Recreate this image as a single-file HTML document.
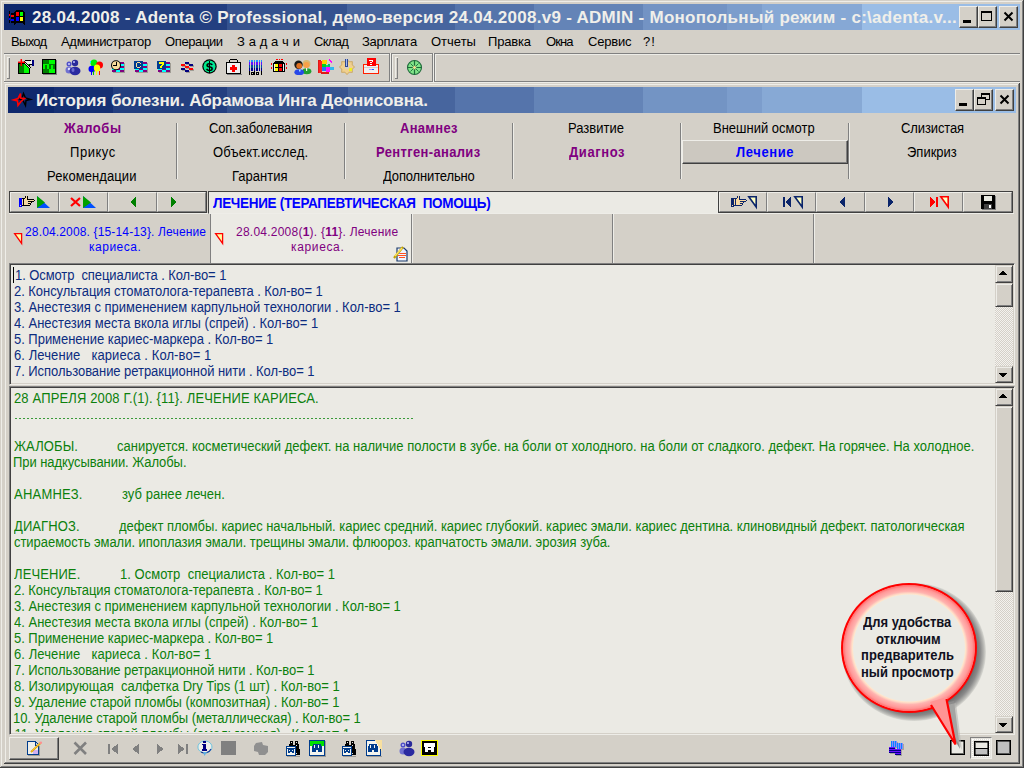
<!DOCTYPE html>
<html><head><meta charset="utf-8"><style>
*{margin:0;padding:0;box-sizing:border-box}
html,body{width:1024px;height:768px;overflow:hidden;background:#d4d0c8;font-family:"Liberation Sans",sans-serif;position:relative}
.a{position:absolute}
.t{position:absolute;white-space:pre;line-height:1}
.ico{position:absolute;overflow:visible}
.ctext{color:#f0efea;font-weight:bold;font-size:17px}
.cbtn{position:absolute;width:19px;height:22px;background:#d4d0c8;border-top:1px solid #eeede8;border-left:1px solid #eeede8;border-right:1px solid #404040;border-bottom:1px solid #404040;box-shadow:inset -1px -1px 0 #808080}
.cbtn svg{position:absolute;left:0;top:0}
.menu{font-size:13px;color:#000}
.grid{font-size:13px;color:#000;transform:scaleY(1.1);transform-origin:0 11px}
.box{position:absolute;background:#ebeae4;border-top:1px solid #808080;border-left:1px solid #808080;border-right:1px solid #eeede8;border-bottom:1px solid #eeede8;box-shadow:inset 1px 1px 0 #404040, inset -1px -1px 0 #d4d0c8}
.lst{font-size:13px;color:#0c2c80;transform:scaleY(1.1);transform-origin:0 11px}
.grn{font-size:13px;color:#0c800c;transform:scaleY(1.1);transform-origin:0 11px}
.sbtn{position:absolute;width:17px;height:17px;background:#d4d0c8;border-top:1px solid #d4d0c8;border-left:1px solid #d4d0c8;border-right:1px solid #404040;border-bottom:1px solid #404040;box-shadow:inset 1px 1px 0 #eeede8, inset -1px -1px 0 #808080}
.sbtn svg{position:absolute;left:0;top:0}
.raised{position:absolute;background:#d4d0c8;border-top:1px solid #eeede8;border-left:1px solid #eeede8;border-right:1px solid #404040;border-bottom:1px solid #404040;box-shadow:inset -1px -1px 0 #808080}
.rb{position:absolute;background:#d4d0c8;border-top:1px solid #eeede8;border-left:1px solid #eeede8;border-right:1px solid #808080;border-bottom:1px solid #808080}
</style></head><body>
<div class="a" style="left:1px;top:1px;width:1021px;height:1px;background:#eeede8;"></div>
<div class="a" style="left:1px;top:1px;width:1px;height:765px;background:#eeede8;"></div>
<div class="a" style="left:1022px;top:1px;width:1px;height:766px;background:#808080;"></div>
<div class="a" style="left:1023px;top:0px;width:1px;height:768px;background:#404040;"></div>
<div class="a" style="left:1px;top:766px;width:1022px;height:1px;background:#808080;"></div>
<div class="a" style="left:0px;top:767px;width:1024px;height:1px;background:#404040;"></div>
<div class="a" style="left:4px;top:4px;width:46px;height:26px;background:#0e286d;"></div>
<div class="a" style="left:50px;top:4px;width:60px;height:26px;background:#163074;"></div>
<div class="a" style="left:110px;top:4px;width:117px;height:26px;background:#233f80;"></div>
<div class="a" style="left:227px;top:4px;width:120px;height:26px;background:#35528f;"></div>
<div class="a" style="left:347px;top:4px;width:108px;height:26px;background:#47659e;"></div>
<div class="a" style="left:455px;top:4px;width:79px;height:26px;background:#5574ab;"></div>
<div class="a" style="left:534px;top:4px;width:109px;height:26px;background:#6484b7;"></div>
<div class="a" style="left:643px;top:4px;width:84px;height:26px;background:#7393c4;"></div>
<div class="a" style="left:727px;top:4px;width:35px;height:26px;background:#7c9dcc;"></div>
<div class="a" style="left:762px;top:4px;width:100px;height:26px;background:#86a8d5;"></div>
<div class="a" style="left:862px;top:4px;width:158px;height:26px;background:#9abde6;"></div>
<svg class="ico" style="left:8px;top:9px" width="20" height="17" shape-rendering="crispEdges"><rect x="1" y="2" width="1" height="12" fill="#000"/><rect x="1" y="5" width="1" height="2" fill="#ff0000"/><rect x="1" y="9" width="1" height="2" fill="#0000ff"/><rect x="3" y="4" width="3" height="10" fill="#000"/><rect x="3" y="6" width="3" height="2" fill="#ff0000"/><rect x="3" y="10" width="3" height="2" fill="#0000ff"/><path d="M6 3 L9 1 L14 1 L17 3 L17 16 L14 14 L9 14 L6 16Z" fill="#000"/><rect x="8" y="3" width="3" height="4" fill="#ff0000"/><rect x="12" y="3" width="3" height="4" fill="#00ff00"/><rect x="8" y="8" width="3" height="4" fill="#0000ff"/><rect x="12" y="8" width="3" height="4" fill="#ffff00"/></svg>
<div class="t ctext" style="left:32.00px;top:9px;letter-spacing:0.275px;">28.04.2008 - Adenta © Professional, демо-версия 24.04.2008.v9 - ADMIN - Монопольный режим - c:\adenta.v...</div>
<div class="cbtn" style="left:959px;top:6px"><svg width="17" height="20"><rect x="3" y="13" width="8" height="3" fill="#000"/></svg></div>
<div class="cbtn" style="left:978px;top:6px"><svg width="17" height="20"><rect x="2.5" y="4.5" width="10" height="9" fill="none" stroke="#000" stroke-width="1"/><rect x="2" y="4" width="11" height="2" fill="#000"/></svg></div>
<div class="cbtn" style="left:999px;top:6px"><svg width="17" height="20"><path d="M4.5 5.5 L12.5 13.5 M12.5 5.5 L4.5 13.5" stroke="#000" stroke-width="2"/></svg></div>
<div class="t menu" style="left:11.00px;top:35px;letter-spacing:-0.675px;">Выход</div>
<div class="t menu" style="left:61.00px;top:35px;letter-spacing:-0.300px;">Администратор</div>
<div class="t menu" style="left:165.00px;top:35px;letter-spacing:-0.386px;">Операции</div>
<div class="t menu" style="left:237.00px;top:35px;letter-spacing:0.090px;">З а д а ч и</div>
<div class="t menu" style="left:314.00px;top:35px;letter-spacing:-0.675px;">Склад</div>
<div class="t menu" style="left:362.00px;top:35px;letter-spacing:-0.257px;">Зарплата</div>
<div class="t menu" style="left:431.00px;top:35px;letter-spacing:0.000px;">Отчеты</div>
<div class="t menu" style="left:488.00px;top:35px;letter-spacing:-0.180px;">Правка</div>
<div class="t menu" style="left:546.00px;top:35px;letter-spacing:-0.900px;">Окна</div>
<div class="t menu" style="left:588.00px;top:35px;letter-spacing:-0.180px;">Сервис</div>
<div class="t menu" style="left:643.00px;top:35px;letter-spacing:0.900px;">?!</div>
<div class="a" style="left:3px;top:53px;width:387px;height:1px;background:#808080;"></div>
<div class="a" style="left:3px;top:81px;width:387px;height:1px;background:#808080;"></div>
<div class="a" style="left:3px;top:53px;width:1px;height:29px;background:#808080;"></div>
<div class="a" style="left:389px;top:53px;width:1px;height:29px;background:#808080;"></div>
<div class="a" style="left:4px;top:54px;width:385px;height:1px;background:#eeede8;"></div>
<div class="a" style="left:4px;top:54px;width:1px;height:27px;background:#eeede8;"></div>
<div class="a" style="left:3px;top:82px;width:388px;height:1px;background:#eeede8;"></div>
<div class="a" style="left:390px;top:53px;width:1px;height:30px;background:#eeede8;"></div>
<div class="a" style="left:391px;top:53px;width:42px;height:1px;background:#808080;"></div>
<div class="a" style="left:391px;top:81px;width:42px;height:1px;background:#808080;"></div>
<div class="a" style="left:391px;top:53px;width:1px;height:29px;background:#808080;"></div>
<div class="a" style="left:432px;top:53px;width:1px;height:29px;background:#808080;"></div>
<div class="a" style="left:392px;top:54px;width:40px;height:1px;background:#eeede8;"></div>
<div class="a" style="left:392px;top:54px;width:1px;height:27px;background:#eeede8;"></div>
<div class="a" style="left:391px;top:82px;width:43px;height:1px;background:#eeede8;"></div>
<div class="a" style="left:433px;top:53px;width:1px;height:30px;background:#eeede8;"></div>
<div class="a" style="left:434px;top:53px;width:586px;height:1px;background:#808080;"></div>
<div class="a" style="left:434px;top:81px;width:586px;height:1px;background:#808080;"></div>
<div class="a" style="left:434px;top:53px;width:1px;height:29px;background:#808080;"></div>
<div class="a" style="left:435px;top:54px;width:585px;height:1px;background:#eeede8;"></div>
<div class="a" style="left:435px;top:54px;width:1px;height:27px;background:#eeede8;"></div>
<div class="a" style="left:434px;top:82px;width:586px;height:1px;background:#eeede8;"></div>
<div class="a" style="left:3px;top:53px;width:1px;height:30px;background:#d4d0c8;"></div>
<div class="a" style="left:7px;top:57px;width:1px;height:21px;background:#eeede8;"></div>
<div class="a" style="left:9px;top:57px;width:1px;height:22px;background:#808080;"></div>
<div class="a" style="left:7px;top:57px;width:3px;height:1px;background:#eeede8;"></div>
<div class="a" style="left:7px;top:78px;width:3px;height:1px;background:#808080;"></div>
<div class="a" style="left:395px;top:57px;width:1px;height:21px;background:#eeede8;"></div>
<div class="a" style="left:397px;top:57px;width:1px;height:22px;background:#808080;"></div>
<div class="a" style="left:395px;top:57px;width:3px;height:1px;background:#eeede8;"></div>
<div class="a" style="left:395px;top:78px;width:3px;height:1px;background:#808080;"></div>
<svg class="ico" style="left:18px;top:59px;" width="16" height="15" viewBox="0 0 16 15" shape-rendering="crispEdges"><rect x="0" y="4" width="12" height="11" fill="#000"/><rect x="1" y="5" width="5" height="9" fill="#008000"/><rect x="6" y="5" width="5" height="9" fill="#00ff00"/><rect x="7" y="1" width="6" height="1" fill="#000"/><rect x="6" y="2" width="1" height="1" fill="#000"/><rect x="7" y="2" width="6" height="3" fill="#f0f0ea"/><rect x="13" y="2" width="1" height="3" fill="#f0f0ea"/><rect x="12" y="5" width="2" height="1" fill="#000"/><rect x="14" y="1" width="2" height="6" fill="#000080"/><rect x="5" y="3" width="1" height="1" fill="#000"/><rect x="6" y="3" width="1" height="1" fill="#f0f0ea"/><rect x="7" y="3" width="1" height="1" fill="#000"/><rect x="6" y="4" width="1" height="1" fill="#000"/><rect x="7" y="4" width="1" height="1" fill="#f0f0ea"/><rect x="8" y="4" width="1" height="1" fill="#000"/><rect x="7" y="5" width="1" height="1" fill="#000"/><rect x="8" y="5" width="1" height="1" fill="#f0f0ea"/><rect x="9" y="5" width="1" height="1" fill="#000"/><rect x="8" y="6" width="1" height="1" fill="#000"/><rect x="9" y="6" width="1" height="1" fill="#f0f0ea"/><rect x="10" y="6" width="1" height="1" fill="#000"/><rect x="9" y="7" width="1" height="1" fill="#000"/><rect x="10" y="7" width="1" height="1" fill="#f0f0ea"/><rect x="11" y="7" width="1" height="1" fill="#000"/><rect x="10" y="8" width="1" height="1" fill="#000"/><rect x="11" y="8" width="1" height="1" fill="#f0f0ea"/><rect x="12" y="8" width="1" height="1" fill="#000"/><rect x="0" y="3" width="7" height="1" fill="#ff0000"/><rect x="0" y="2" width="7" height="1" fill="rgba(255,0,0,.45)"/><rect x="3" y="0" width="1" height="7" fill="#ff0000"/><rect x="2" y="0" width="1" height="7" fill="rgba(255,0,0,.45)"/></svg>
<svg class="ico" style="left:42px;top:59px;" width="15" height="16" viewBox="0 0 15 16" shape-rendering="crispEdges"><rect x="0" y="0" width="14" height="15" fill="#000"/><rect x="1" y="1" width="6" height="4" fill="#008000"/><rect x="7" y="1" width="6" height="4" fill="#00ff00"/><rect x="1" y="5" width="6" height="5" fill="#00ff00"/><rect x="3" y="6" width="2" height="4" fill="#008000"/><rect x="7" y="5" width="6" height="5" fill="#008000"/><rect x="9" y="6" width="2" height="4" fill="#00ff00"/><rect x="1" y="10" width="6" height="4" fill="#008000"/><rect x="7" y="10" width="6" height="4" fill="#00ff00"/><rect x="1" y="15" width="14" height="1" fill="#808080"/><rect x="14" y="1" width="1" height="15" fill="#808080"/></svg>
<svg class="ico" style="left:65px;top:59px;" width="16" height="16" viewBox="0 0 16 16" shape-rendering="crispEdges"><g shape-rendering="geometricPrecision"><circle cx="4" cy="5" r="2.5" fill="#5050c8"/><circle cx="4" cy="5" r="1" fill="#d0d0ff"/><ellipse cx="4" cy="11" rx="3.5" ry="3.5" fill="#7070d0"/><circle cx="4" cy="10" r="1.2" fill="#e0e0ff"/><circle cx="10" cy="4" r="3.2" fill="#2a2a9a"/><circle cx="9" cy="3" r="1" fill="#c0c0ff"/><ellipse cx="10" cy="12" rx="5.5" ry="4.2" fill="#2a2aa0"/><ellipse cx="8" cy="11" rx="1.5" ry="2" fill="#6a6ad0"/></g></svg>
<svg class="ico" style="left:88px;top:59px;" width="16" height="16" viewBox="0 0 16 16" shape-rendering="crispEdges"><g shape-rendering="geometricPrecision"><ellipse cx="6" cy="4" rx="3.5" ry="3.5" fill="#00ee00"/><ellipse cx="11.5" cy="6" rx="3.5" ry="3.5" fill="#ff0000"/><ellipse cx="4" cy="10" rx="3.5" ry="3.2" fill="#0000ff"/><ellipse cx="9" cy="9" rx="3.2" ry="3.5" fill="#ffff00"/></g><rect x="3" y="13" width="1" height="3" fill="#0000ff"/><rect x="5" y="12" width="1" height="4" fill="#00c000"/><rect x="8" y="12" width="1" height="4" fill="#ffff00"/><rect x="11" y="12" width="1" height="4" fill="#ff0000"/><rect x="2" y="2" width="1" height="2" fill="#00ffff"/></svg>
<svg class="ico" style="left:111px;top:60px;" width="15" height="14" viewBox="0 0 15 14" shape-rendering="crispEdges"><rect x="1" y="2" width="4" height="2" fill="#800080"/><rect x="5" y="2" width="4" height="2" fill="#00ffff"/><rect x="9" y="2" width="4" height="2" fill="#800080"/><rect x="1" y="4" width="4" height="2" fill="#00ffff"/><rect x="5" y="4" width="4" height="2" fill="#800080"/><rect x="9" y="4" width="4" height="2" fill="#00ffff"/><rect x="1" y="6" width="4" height="2" fill="#800080"/><rect x="5" y="6" width="4" height="2" fill="#00ffff"/><rect x="9" y="6" width="4" height="2" fill="#800080"/><rect x="1" y="8" width="4" height="2" fill="#00ffff"/><rect x="5" y="8" width="4" height="2" fill="#800080"/><rect x="9" y="8" width="4" height="2" fill="#00ffff"/><rect x="1" y="10" width="4" height="2" fill="#800080"/><rect x="5" y="10" width="4" height="2" fill="#00ffff"/><rect x="9" y="10" width="4" height="2" fill="#800080"/><rect x="2" y="12" width="12" height="1" fill="#a09c94"/><rect x="13" y="3" width="1" height="10" fill="#a09c94"/><g shape-rendering="geometricPrecision"><circle cx="5" cy="5.2" r="5" fill="#000"/><circle cx="5" cy="5.2" r="4" fill="#f8dc9c"/></g><rect x="5" y="2" width="1" height="3" fill="#000"/><rect x="2" y="5" width="4" height="1" fill="#000"/></svg>
<svg class="ico" style="left:134px;top:60px;" width="15" height="14" viewBox="0 0 15 14" shape-rendering="crispEdges"><rect x="1" y="2" width="4" height="2" fill="#800080"/><rect x="5" y="2" width="4" height="2" fill="#00ffff"/><rect x="9" y="2" width="4" height="2" fill="#800080"/><rect x="1" y="4" width="4" height="2" fill="#00ffff"/><rect x="5" y="4" width="4" height="2" fill="#800080"/><rect x="9" y="4" width="4" height="2" fill="#00ffff"/><rect x="1" y="6" width="4" height="2" fill="#800080"/><rect x="5" y="6" width="4" height="2" fill="#00ffff"/><rect x="9" y="6" width="4" height="2" fill="#800080"/><rect x="1" y="8" width="4" height="2" fill="#00ffff"/><rect x="5" y="8" width="4" height="2" fill="#800080"/><rect x="9" y="8" width="4" height="2" fill="#00ffff"/><rect x="1" y="10" width="4" height="2" fill="#800080"/><rect x="5" y="10" width="4" height="2" fill="#00ffff"/><rect x="9" y="10" width="4" height="2" fill="#800080"/><rect x="2" y="12" width="12" height="1" fill="#a09c94"/><rect x="13" y="3" width="1" height="10" fill="#a09c94"/><rect x="0" y="1" width="9" height="8" fill="#003c90"/><rect x="3" y="2" width="3" height="1" fill="#f8dc9c"/><rect x="2" y="3" width="1" height="4" fill="#f8dc9c"/><rect x="3" y="7" width="3" height="1" fill="#f8dc9c"/><rect x="6" y="3" width="1" height="1" fill="#f8dc9c"/><rect x="6" y="6" width="1" height="1" fill="#f8dc9c"/></svg>
<svg class="ico" style="left:157px;top:60px;" width="15" height="14" viewBox="0 0 15 14" shape-rendering="crispEdges"><rect x="1" y="2" width="4" height="2" fill="#800080"/><rect x="5" y="2" width="4" height="2" fill="#00ffff"/><rect x="9" y="2" width="4" height="2" fill="#800080"/><rect x="1" y="4" width="4" height="2" fill="#00ffff"/><rect x="5" y="4" width="4" height="2" fill="#800080"/><rect x="9" y="4" width="4" height="2" fill="#00ffff"/><rect x="1" y="6" width="4" height="2" fill="#800080"/><rect x="5" y="6" width="4" height="2" fill="#00ffff"/><rect x="9" y="6" width="4" height="2" fill="#800080"/><rect x="1" y="8" width="4" height="2" fill="#00ffff"/><rect x="5" y="8" width="4" height="2" fill="#800080"/><rect x="9" y="8" width="4" height="2" fill="#00ffff"/><rect x="1" y="10" width="4" height="2" fill="#800080"/><rect x="5" y="10" width="4" height="2" fill="#00ffff"/><rect x="9" y="10" width="4" height="2" fill="#800080"/><rect x="2" y="12" width="12" height="1" fill="#a09c94"/><rect x="13" y="3" width="1" height="10" fill="#a09c94"/><rect x="0" y="1" width="9" height="8" fill="#003c90"/><rect x="2" y="2" width="5" height="2" fill="#ffff00"/><rect x="5" y="4" width="2" height="1" fill="#ffff00"/><rect x="4" y="5" width="2" height="1" fill="#ffff00"/><rect x="3" y="6" width="2" height="2" fill="#ffff00"/></svg>
<svg class="ico" style="left:181px;top:62px;" width="13" height="11" viewBox="0 0 13 11" shape-rendering="crispEdges"><rect x="5" y="1" width="4" height="2" fill="#a09c94"/><rect x="1" y="3" width="4" height="2" fill="#a09c94"/><rect x="9" y="3" width="4" height="2" fill="#a09c94"/><rect x="5" y="5" width="4" height="2" fill="#a09c94"/><rect x="1" y="7" width="4" height="2" fill="#a09c94"/><rect x="9" y="7" width="4" height="2" fill="#a09c94"/><rect x="5" y="9" width="4" height="2" fill="#a09c94"/><rect x="4" y="0" width="4" height="2" fill="#000080"/><rect x="0" y="2" width="4" height="2" fill="#ff0000"/><rect x="8" y="2" width="4" height="2" fill="#000080"/><rect x="4" y="4" width="4" height="2" fill="#ff0000"/><rect x="0" y="6" width="4" height="2" fill="#000080"/><rect x="8" y="6" width="4" height="2" fill="#ff0000"/><rect x="4" y="8" width="4" height="2" fill="#000080"/></svg>
<svg class="ico" style="left:202px;top:59px;" width="16" height="16" viewBox="0 0 16 16" shape-rendering="crispEdges"><g shape-rendering="geometricPrecision"><circle cx="7.5" cy="7.5" r="7.2" fill="#000"/><circle cx="7.5" cy="7.5" r="6" fill="#00e890"/><text x="7.6" y="11.8" font-family="Liberation Sans" font-weight="bold" font-size="11.5" text-anchor="middle" fill="#000">S</text></g><rect x="7" y="2" width="1" height="12" fill="#000"/></svg>
<svg class="ico" style="left:226px;top:59px;" width="16" height="16" viewBox="0 0 16 16" shape-rendering="crispEdges"><rect x="4" y="0" width="7" height="1" fill="#000"/><rect x="3" y="1" width="1" height="3" fill="#000"/><rect x="11" y="1" width="1" height="3" fill="#000"/><rect x="0" y="3" width="15" height="12" fill="#000"/><rect x="1" y="4" width="13" height="10" fill="#f0f0f0"/><rect x="6" y="6" width="3" height="7" fill="#ff0000"/><rect x="4" y="8" width="7" height="3" fill="#ff0000"/><rect x="1" y="15" width="15" height="1" fill="#808080"/></svg>
<svg class="ico" style="left:249px;top:60px;" width="14" height="15" viewBox="0 0 14 15" shape-rendering="crispEdges"><rect x="0" y="0" width="1" height="2" fill="#1898ff"/><rect x="0" y="2" width="1" height="3" fill="#6010ff"/><rect x="0" y="5" width="1" height="3" fill="#0050a0"/><rect x="0" y="8" width="1" height="3" fill="#000090"/><rect x="2" y="0" width="2" height="2" fill="#1898ff"/><rect x="2" y="2" width="2" height="3" fill="#6010ff"/><rect x="2" y="5" width="2" height="3" fill="#0050a0"/><rect x="2" y="8" width="2" height="3" fill="#000090"/><rect x="5" y="0" width="1" height="2" fill="#1898ff"/><rect x="5" y="2" width="1" height="3" fill="#6010ff"/><rect x="5" y="5" width="1" height="3" fill="#0050a0"/><rect x="5" y="8" width="1" height="3" fill="#000090"/><rect x="7" y="0" width="2" height="2" fill="#1898ff"/><rect x="7" y="2" width="2" height="3" fill="#6010ff"/><rect x="7" y="5" width="2" height="3" fill="#0050a0"/><rect x="7" y="8" width="2" height="3" fill="#000090"/><rect x="10" y="0" width="1" height="2" fill="#1898ff"/><rect x="10" y="2" width="1" height="3" fill="#6010ff"/><rect x="10" y="5" width="1" height="3" fill="#0050a0"/><rect x="10" y="8" width="1" height="3" fill="#000090"/><rect x="12" y="0" width="1" height="2" fill="#1898ff"/><rect x="12" y="2" width="1" height="3" fill="#6010ff"/><rect x="12" y="5" width="1" height="3" fill="#0050a0"/><rect x="12" y="8" width="1" height="3" fill="#000090"/><rect x="0" y="11" width="1" height="4" fill="#000"/><rect x="12" y="11" width="1" height="4" fill="#000"/><rect x="2" y="12" width="3" height="3" fill="#000"/><rect x="3" y="13" width="1" height="1" fill="#d4d0c8"/><rect x="7" y="12" width="3" height="3" fill="#000"/><rect x="8" y="13" width="1" height="1" fill="#d4d0c8"/><rect x="5" y="11" width="1" height="4" fill="#000"/></svg>
<svg class="ico" style="left:271px;top:59px;" width="16" height="14" viewBox="0 0 16 14" shape-rendering="crispEdges"><rect x="5" y="0" width="2" height="1" fill="#ff0000"/><rect x="8" y="0" width="1" height="1" fill="#ff0000"/><rect x="10" y="0" width="2" height="1" fill="#ff0000"/><rect x="0" y="4" width="1" height="2" fill="#ff0000"/><rect x="0" y="8" width="1" height="2" fill="#ff0000"/><rect x="15" y="4" width="1" height="2" fill="#ff0000"/><rect x="15" y="8" width="1" height="2" fill="#ff0000"/><rect x="4" y="2" width="8" height="1" fill="#000"/><rect x="3" y="3" width="10" height="1" fill="#000"/><rect x="2" y="4" width="12" height="9" fill="#000"/><rect x="4" y="5" width="3" height="3" fill="#ffff00"/><rect x="8" y="5" width="3" height="3" fill="#ff0000"/><rect x="4" y="9" width="3" height="3" fill="#ffff00"/><rect x="8" y="9" width="3" height="3" fill="#ff0000"/><rect x="3" y="5" width="1" height="7" fill="#f0f0f0"/><rect x="12" y="5" width="1" height="7" fill="#f0f0f0"/></svg>
<svg class="ico" style="left:294px;top:59px;" width="18" height="17" viewBox="0 0 18 17" shape-rendering="crispEdges"><g shape-rendering="geometricPrecision"><circle cx="12.5" cy="4.8" r="3.9" fill="#d8b870"/><circle cx="12.5" cy="6" r="3" fill="#f8a048"/><ellipse cx="12.8" cy="12.2" rx="4.6" ry="3" fill="#20a030"/><rect x="12" y="9" width="1.2" height="3" fill="#f0f0f0"/><circle cx="4.5" cy="5.8" r="4.2" fill="#181818"/><circle cx="5.2" cy="6.8" r="2.9" fill="#e07020"/><ellipse cx="5.2" cy="13.2" rx="4.8" ry="2.9" fill="#2848e8"/><rect x="5" y="10.5" width="1.5" height="2" fill="#a0e0ff"/></g></svg>
<svg class="ico" style="left:317px;top:59px;" width="17" height="16" viewBox="0 0 17 16" shape-rendering="crispEdges"><g shape-rendering="crispEdges"><rect x="1" y="1" width="3" height="13" fill="#e01818"/><rect x="2" y="2" width="3" height="12" fill="#ff2020"/><rect x="5" y="1" width="5" height="4" fill="#ffd000"/><rect x="5" y="5" width="4" height="3" fill="#00d020"/><rect x="5" y="8" width="4" height="4" fill="#2070ff"/><rect x="9" y="8" width="4" height="5" fill="#ff10ff"/><rect x="9" y="6" width="2" height="2" fill="#10e060"/><rect x="11" y="5" width="2" height="3" fill="#00c070"/><rect x="13" y="8" width="4" height="3" fill="#30b8f0"/><rect x="4" y="13" width="8" height="2" fill="#e01818"/></g><path d="M12 0.5 L15 3.5" stroke="#ff00ff" stroke-width="1.6"/></svg>
<svg class="ico" style="left:339px;top:58px;" width="17" height="17" viewBox="0 0 17 17" shape-rendering="crispEdges"><g shape-rendering="geometricPrecision"><polygon points="15.60,9.00 13.17,11.14 13.37,14.37 10.14,14.17 8.00,16.60 5.86,14.17 2.63,14.37 2.83,11.14 0.40,9.00 2.83,6.86 2.63,3.63 5.86,3.83 8.00,1.40 10.14,3.83 13.37,3.63 13.17,6.86" fill="#f0d090" stroke="#c8a050" stroke-width="0.8"/><circle cx="8" cy="9" r="2.2" fill="#d4d0c8"/></g><rect x="6" y="1" width="3" height="8" fill="#304890"/><rect x="7" y="1" width="1" height="7" fill="#a0b8f0"/><rect x="10" y="10" width="3" height="3" fill="#f0f020"/></svg>
<svg class="ico" style="left:363px;top:58px;" width="17" height="17" viewBox="0 0 17 17" shape-rendering="crispEdges"><rect x="0" y="6" width="16" height="10" fill="#ff2000"/><rect x="1" y="7" width="14" height="8" fill="#f0f0f0"/><rect x="1" y="9" width="14" height="1" fill="#d0d0d0"/><rect x="6" y="11" width="5" height="1" fill="#a0a0ff"/><rect x="9" y="11" width="2" height="1" fill="#2060ff"/><rect x="4" y="0" width="9" height="8" fill="#ff0000"/><rect x="6" y="2" width="4" height="1" fill="#fff"/><rect x="9" y="3" width="1" height="1" fill="#fff"/><rect x="7" y="4" width="2" height="1" fill="#fff"/><rect x="7" y="6" width="2" height="1" fill="#fff"/></svg>
<svg class="ico" style="left:407px;top:60px;" width="15" height="15" viewBox="0 0 15 15" shape-rendering="crispEdges"><g shape-rendering="geometricPrecision"><circle cx="7.5" cy="7.5" r="7" fill="#80e488" stroke="#1e6a3a" stroke-width="1.1"/><path d="M7.5 0 V15 M0 7.5 H15" stroke="#1e6a3a" stroke-width="1.2"/><path d="M3.5 3.5 L11.5 11.5 M11.5 3.5 L3.5 11.5" stroke="#1e6a3a" stroke-width="0.9"/><path d="M7.5 0 L6 -1 L9 -1Z M7.5 15 L6 16 L9 16Z M0 7.5 L-1 6 L-1 9Z M15 7.5 L16 6 L16 9Z" fill="#d4d0c8"/><path d="M7.5 5.5 L9.5 7.5 L7.5 9.5 L5.5 7.5Z" fill="#f0e090"/></g></svg>
<div class="a" style="left:5px;top:84px;width:1013px;height:1px;background:#eeede8;"></div>
<div class="a" style="left:5px;top:84px;width:1px;height:678px;background:#eeede8;"></div>
<div class="a" style="left:1018px;top:84px;width:1px;height:679px;background:#808080;"></div>
<div class="a" style="left:1019px;top:83px;width:1px;height:681px;background:#404040;"></div>
<div class="a" style="left:5px;top:762px;width:1014px;height:1px;background:#808080;"></div>
<div class="a" style="left:4px;top:763px;width:1016px;height:1px;background:#404040;"></div>
<div class="a" style="left:8px;top:87px;width:46px;height:26px;background:#0e286d;"></div>
<div class="a" style="left:54px;top:87px;width:59px;height:26px;background:#163074;"></div>
<div class="a" style="left:113px;top:87px;width:114px;height:26px;background:#233f80;"></div>
<div class="a" style="left:227px;top:87px;width:121px;height:26px;background:#35528f;"></div>
<div class="a" style="left:348px;top:87px;width:107px;height:26px;background:#47659e;"></div>
<div class="a" style="left:455px;top:87px;width:79px;height:26px;background:#5574ab;"></div>
<div class="a" style="left:534px;top:87px;width:109px;height:26px;background:#6484b7;"></div>
<div class="a" style="left:643px;top:87px;width:84px;height:26px;background:#7394c4;"></div>
<div class="a" style="left:727px;top:87px;width:35px;height:26px;background:#7c9dcc;"></div>
<div class="a" style="left:762px;top:87px;width:100px;height:26px;background:#87a9d5;"></div>
<div class="a" style="left:862px;top:87px;width:154px;height:26px;background:#9abde6;"></div>
<svg class="ico" style="left:0px;top:80px" width="40" height="30" shape-rendering="geometricPrecision"><path d="M23.5 13.5 L22 18 L19.5 19 L23 20.5 L25.5 25.5 L26 20.5 L30.5 19.5 L25.5 18Z" fill="none" stroke="#000" stroke-width="1.4"/><path d="M20.5 13.5 L18 18.5 L13.5 20 L17.5 21 L18 25.5 L21 21.5 L24.5 18.5 L20.5 18Z" fill="none" stroke="#ff0000" stroke-width="1.6"/></svg>
<div class="t ctext" style="left:36.00px;top:92px;letter-spacing:-0.090px;">История болезни. Абрамова Инга Деонисовна.</div>
<div class="cbtn" style="left:955px;top:89px"><svg width="17" height="20"><rect x="3" y="13" width="8" height="3" fill="#000"/></svg></div>
<div class="cbtn" style="left:974px;top:89px"><svg width="17" height="20" shape-rendering="crispEdges"><rect x="6.5" y="3.5" width="8" height="6" fill="none" stroke="#000"/><rect x="6" y="3" width="9" height="2" fill="#000"/><rect x="2.5" y="7.5" width="8" height="7" fill="#d4d0c8" stroke="#000"/><rect x="2" y="7" width="9" height="2" fill="#000"/></svg></div>
<div class="cbtn" style="left:995px;top:89px"><svg width="17" height="20"><path d="M4.5 5.5 L12.5 13.5 M12.5 5.5 L4.5 13.5" stroke="#000" stroke-width="2"/></svg></div>
<div class="a" style="left:176px;top:123px;width:1px;height:56px;background:#808080;"></div>
<div class="a" style="left:177px;top:123px;width:1px;height:56px;background:#eeede8;"></div>
<div class="a" style="left:344px;top:123px;width:1px;height:56px;background:#808080;"></div>
<div class="a" style="left:345px;top:123px;width:1px;height:56px;background:#eeede8;"></div>
<div class="a" style="left:512px;top:123px;width:1px;height:56px;background:#808080;"></div>
<div class="a" style="left:513px;top:123px;width:1px;height:56px;background:#eeede8;"></div>
<div class="a" style="left:680px;top:123px;width:1px;height:56px;background:#808080;"></div>
<div class="a" style="left:681px;top:123px;width:1px;height:56px;background:#eeede8;"></div>
<div class="a" style="left:848px;top:123px;width:1px;height:56px;background:#808080;"></div>
<div class="a" style="left:849px;top:123px;width:1px;height:56px;background:#eeede8;"></div>
<div class="raised" style="left:682px;top:140px;width:166px;height:24px;background:#ccc8c0"></div>
<div class="t grid" style="left:64.00px;top:122px;letter-spacing:0.540px;color:#800080;font-weight:bold;">Жалобы</div>
<div class="t grid" style="left:209.00px;top:122px;letter-spacing:-0.129px;">Соп.заболевания</div>
<div class="t grid" style="left:400.00px;top:122px;letter-spacing:0.300px;color:#800080;font-weight:bold;">Анамнез</div>
<div class="t grid" style="left:568.00px;top:122px;letter-spacing:0.000px;">Развитие</div>
<div class="t grid" style="left:713.00px;top:122px;letter-spacing:0.000px;">Внешний осмотр</div>
<div class="t grid" style="left:901.00px;top:122px;letter-spacing:-0.113px;">Слизистая</div>
<div class="t grid" style="left:70.00px;top:146px;letter-spacing:0.540px;">Прикус</div>
<div class="t grid" style="left:213.00px;top:146px;letter-spacing:0.207px;">Объект.исслед.</div>
<div class="t grid" style="left:376.00px;top:146px;letter-spacing:0.346px;color:#800080;font-weight:bold;">Рентген-анализ</div>
<div class="t grid" style="left:569.00px;top:146px;letter-spacing:0.600px;color:#800080;font-weight:bold;">Диагноз</div>
<div class="t grid" style="left:736.00px;top:146px;letter-spacing:0.600px;color:#0000ff;font-weight:bold;">Лечение</div>
<div class="t grid" style="left:907.00px;top:146px;letter-spacing:0.000px;">Эпикриз</div>
<div class="t grid" style="left:47.00px;top:170px;letter-spacing:0.082px;">Рекомендации</div>
<div class="t grid" style="left:232.00px;top:170px;letter-spacing:0.000px;">Гарантия</div>
<div class="t grid" style="left:383.00px;top:170px;letter-spacing:-0.150px;">Дополнительно</div>
<div class="a" style="left:9px;top:191px;width:198px;height:22px;border:1px solid #404040"></div>
<div class="rb" style="left:10px;top:192px;width:49px;height:20px"></div>
<div class="rb" style="left:59px;top:192px;width:49px;height:20px"></div>
<div class="rb" style="left:108px;top:192px;width:49px;height:20px"></div>
<div class="rb" style="left:157px;top:192px;width:49px;height:20px"></div>
<div class="a" style="left:9px;top:213px;width:199px;height:1px;background:#eeede8;"></div>
<div class="a" style="left:208px;top:191px;width:510px;height:23px;background:#ebeae4;border-top:1px solid #404040;border-left:1px solid #404040;border-right:1px solid #eeede8;border-bottom:1px solid #eeede8"></div>
<div class="t " style="left:213.00px;top:197px;letter-spacing:-0.308px;font-size:13.5px;font-weight:bold;color:#0000ff;transform:scaleY(1.1);transform-origin:0 11.5px">ЛЕЧЕНИЕ (ТЕРАПЕВТИЧЕСКАЯ  ПОМОЩЬ)</div>
<div class="a" style="left:718px;top:191px;width:295px;height:22px;border:1px solid #404040"></div>
<div class="rb" style="left:719px;top:192px;width:48px;height:20px"></div>
<div class="rb" style="left:767px;top:192px;width:49px;height:20px"></div>
<div class="rb" style="left:816px;top:192px;width:49px;height:20px"></div>
<div class="rb" style="left:865px;top:192px;width:49px;height:20px"></div>
<div class="rb" style="left:914px;top:192px;width:49px;height:20px"></div>
<div class="rb" style="left:963px;top:192px;width:49px;height:20px"></div>
<div class="a" style="left:718px;top:213px;width:296px;height:1px;background:#eeede8;"></div>
<svg class="ico" style="left:17px;top:194px;" width="18" height="13" viewBox="0 0 18 13" shape-rendering="crispEdges"><rect x="2" y="4" width="3" height="9" fill="#0000ff"/><rect x="3" y="11" width="1" height="1" fill="#f8d8a0"/><rect x="5" y="5" width="1" height="6" fill="#f8d8a0"/><rect x="5" y="4" width="1" height="1" fill="#000"/><rect x="5" y="11" width="1" height="1" fill="#000"/><rect x="6" y="4" width="1" height="8" fill="#000"/><rect x="7" y="5" width="3" height="6" fill="#f8d8a0"/><rect x="7" y="4" width="1" height="1" fill="#000"/><rect x="8" y="2" width="1" height="2" fill="#000"/><rect x="9" y="2" width="1" height="3" fill="#f8d8a0"/><rect x="8" y="4" width="1" height="1" fill="#f8d8a0"/><rect x="10" y="2" width="1" height="3" fill="#000"/><rect x="10" y="5" width="7" height="1" fill="#000"/><rect x="10" y="6" width="7" height="1" fill="#f8d8a0"/><rect x="17" y="6" width="1" height="1" fill="#000"/><rect x="11" y="7" width="6" height="1" fill="#000"/><rect x="10" y="8" width="4" height="1" fill="#f8d8a0"/><rect x="14" y="8" width="1" height="1" fill="#000"/><rect x="11" y="9" width="3" height="1" fill="#000"/><rect x="10" y="10" width="3" height="1" fill="#f8d8a0"/><rect x="13" y="10" width="1" height="1" fill="#000"/><rect x="7" y="11" width="6" height="1" fill="#000"/></svg>
<svg class="ico" style="left:37px;top:196px;" width="13" height="12" viewBox="0 0 13 12" shape-rendering="crispEdges"><g shape-rendering="geometricPrecision"><path d="M0 0 L0 12 L13 12 Z" fill="#0050ff"/><path d="M0 0 L0 12 L8 6.5 Z" fill="#00a000"/><path d="M0 12 L13 12 L12 11 L1 11Z" fill="#00e0ff" opacity="0"/></g></svg>
<svg class="ico" style="left:70px;top:197px;" width="12" height="10" viewBox="0 0 12 10" shape-rendering="crispEdges"><g shape-rendering="geometricPrecision"><path d="M1 1 L10 9 M10 1 L1 9" stroke="#ff0000" stroke-width="2.2"/></g></svg>
<svg class="ico" style="left:83px;top:196px;" width="13" height="12" viewBox="0 0 13 12" shape-rendering="crispEdges"><g shape-rendering="geometricPrecision"><path d="M0 0 L0 12 L13 12 Z" fill="#0050ff"/><path d="M0 0 L0 12 L8 6.5 Z" fill="#00a000"/><path d="M0 12 L13 12 L12 11 L1 11Z" fill="#00e0ff" opacity="0"/></g></svg>
<svg class="ico" style="left:130px;top:197px;" width="7" height="11" viewBox="0 0 7 11" shape-rendering="crispEdges"><path d="M6 0 L6 10 L0 5 Z" fill="#008000" /></svg>
<svg class="ico" style="left:171px;top:197px;" width="7" height="11" viewBox="0 0 7 11" shape-rendering="crispEdges"><path d="M0 0 L0 10 L6 5 Z" fill="#008000" /></svg>
<svg class="ico" style="left:729px;top:194px;" width="18" height="13" viewBox="0 0 18 13" shape-rendering="crispEdges"><rect x="2" y="4" width="3" height="9" fill="#0a246a"/><rect x="3" y="11" width="1" height="1" fill="#f8d8a0"/><rect x="5" y="5" width="1" height="6" fill="#f8d8a0"/><rect x="5" y="4" width="1" height="1" fill="#0a246a"/><rect x="5" y="11" width="1" height="1" fill="#0a246a"/><rect x="6" y="4" width="1" height="8" fill="#0a246a"/><rect x="7" y="5" width="3" height="6" fill="#f8d8a0"/><rect x="7" y="4" width="1" height="1" fill="#0a246a"/><rect x="8" y="2" width="1" height="2" fill="#0a246a"/><rect x="9" y="2" width="1" height="3" fill="#f8d8a0"/><rect x="8" y="4" width="1" height="1" fill="#f8d8a0"/><rect x="10" y="2" width="1" height="3" fill="#0a246a"/><rect x="10" y="5" width="7" height="1" fill="#0a246a"/><rect x="10" y="6" width="7" height="1" fill="#f8d8a0"/><rect x="17" y="6" width="1" height="1" fill="#0a246a"/><rect x="11" y="7" width="6" height="1" fill="#0a246a"/><rect x="10" y="8" width="4" height="1" fill="#f8d8a0"/><rect x="14" y="8" width="1" height="1" fill="#0a246a"/><rect x="11" y="9" width="3" height="1" fill="#0a246a"/><rect x="10" y="10" width="3" height="1" fill="#f8d8a0"/><rect x="13" y="10" width="1" height="1" fill="#0a246a"/><rect x="7" y="11" width="6" height="1" fill="#0a246a"/></svg>
<svg class="ico" style="left:748px;top:196px;" width="9" height="12" viewBox="0 0 9 12" shape-rendering="crispEdges"><g shape-rendering="geometricPrecision"><path d="M0.8 0.8 L8.2 0.8 L8.2 11 Z" fill="#ffffc0" stroke="#0a246a" stroke-width="1.6" stroke-linejoin="miter"/></g></svg>
<svg class="ico" style="left:783px;top:197px;" width="9" height="11" viewBox="0 0 9 11" shape-rendering="crispEdges"><rect x="0" y="0" width="2" height="10" fill="#0a246a"/><path d="M8 0 L8 10 L2 5 Z" fill="#0a246a" /></svg>
<svg class="ico" style="left:794px;top:196px;" width="9" height="12" viewBox="0 0 9 12" shape-rendering="crispEdges"><g shape-rendering="geometricPrecision"><path d="M0.8 0.8 L8.2 0.8 L8.2 11 Z" fill="#ffffc0" stroke="#0a246a" stroke-width="1.6" stroke-linejoin="miter"/></g></svg>
<svg class="ico" style="left:839px;top:197px;" width="7" height="11" viewBox="0 0 7 11" shape-rendering="crispEdges"><path d="M6 0 L6 10 L0 5 Z" fill="#0a246a" /></svg>
<svg class="ico" style="left:888px;top:197px;" width="7" height="11" viewBox="0 0 7 11" shape-rendering="crispEdges"><path d="M0 0 L0 10 L6 5 Z" fill="#0a246a" /></svg>
<svg class="ico" style="left:930px;top:197px;" width="9" height="11" viewBox="0 0 9 11" shape-rendering="crispEdges"><path d="M0 0 L0 10 L6 5 Z" fill="#ff0000" /><rect x="6" y="0" width="2" height="10" fill="#ff0000"/></svg>
<svg class="ico" style="left:940px;top:196px;" width="9" height="12" viewBox="0 0 9 12" shape-rendering="crispEdges"><g shape-rendering="geometricPrecision"><path d="M0.8 0.8 L8.2 0.8 L8.2 11 Z" fill="#ffffc0" stroke="#ff0000" stroke-width="1.6" stroke-linejoin="miter"/></g></svg>
<svg class="ico" style="left:981px;top:195px;" width="15" height="15" viewBox="0 0 15 15" shape-rendering="crispEdges"><rect x="0" y="0" width="14" height="14" fill="#000"/><rect x="3" y="1" width="8" height="5" fill="#e8e8e0"/><rect x="3" y="9" width="8" height="5" fill="#404040"/><rect x="8" y="10" width="2" height="3" fill="#fff"/><rect x="1" y="14" width="14" height="1" fill="#808080"/><rect x="14" y="1" width="1" height="14" fill="#808080"/></svg>
<div class="a" style="left:210px;top:214px;width:1px;height:49px;background:#808080;"></div>
<div class="a" style="left:211px;top:214px;width:1px;height:49px;background:#eeede8;"></div>
<div class="a" style="left:411px;top:214px;width:1px;height:49px;background:#808080;"></div>
<div class="a" style="left:412px;top:214px;width:1px;height:49px;background:#eeede8;"></div>
<div class="a" style="left:612px;top:214px;width:1px;height:49px;background:#808080;"></div>
<div class="a" style="left:613px;top:214px;width:1px;height:49px;background:#eeede8;"></div>
<div class="a" style="left:813px;top:214px;width:1px;height:49px;background:#808080;"></div>
<div class="a" style="left:814px;top:214px;width:1px;height:49px;background:#eeede8;"></div>
<div class="a" style="left:211px;top:214px;width:200px;height:49px;background:#ebeae4;"></div>
<div class="t " style="left:25.00px;top:226px;letter-spacing:0.150px;font-size:12px;color:#0000ff">28.04.2008. {15-14-13}. Лечение</div>
<div class="t " style="left:89.00px;top:241px;letter-spacing:0.515px;font-size:12px;color:#0000ff">кариеса.</div>
<div class="t " style="left:236.00px;top:226px;letter-spacing:0.233px;font-size:12px;color:#800080">28.04.2008(<b>1</b>). {<b>11</b>}. Лечение</div>
<div class="t " style="left:291.00px;top:241px;letter-spacing:0.643px;font-size:12px;color:#800080">кариеса.</div>
<svg class="ico" style="left:14px;top:233px;" width="9" height="12" viewBox="0 0 9 12" shape-rendering="crispEdges"><g shape-rendering="geometricPrecision"><path d="M0.6 0.6 L7.6 0.6 L7.6 10.5 Z" fill="#ffffa0" stroke="#ff0000" stroke-width="1.3"/></g></svg>
<svg class="ico" style="left:215px;top:233px;" width="9" height="12" viewBox="0 0 9 12" shape-rendering="crispEdges"><g shape-rendering="geometricPrecision"><path d="M0.6 0.6 L7.6 0.6 L7.6 10.5 Z" fill="#ffffa0" stroke="#ff0000" stroke-width="1.3"/></g></svg>
<svg class="ico" style="left:394px;top:246px;" width="15" height="17" viewBox="0 0 15 17" shape-rendering="crispEdges"><g shape-rendering="geometricPrecision"><path d="M3 2 L10 2 L13 5 L13 15 L3 15 Z" fill="#f0f4ff" stroke="#1a3a6a" stroke-width="1.2"/><rect x="6" y="7" width="6" height="1" fill="#ff5020"/><rect x="4" y="9" width="8" height="1" fill="#ff5020"/><rect x="5" y="11" width="6" height="1" fill="#ff5020"/><rect x="5" y="7" width="1" height="1" fill="#6080ff"/><path d="M0 12 L9 1" stroke="#c0a000" stroke-width="2.2"/><path d="M1 10 L8 2" stroke="#f8e060" stroke-width="1.5"/></g></svg>
<div class="box" style="left:9px;top:263px;width:1006px;height:122px"></div>
<div class="t lst" style="left:15.00px;top:269px;letter-spacing:-0.084px">1. Осмотр  специалиста . Кол-во= 1</div>
<div class="t lst" style="left:14.00px;top:285px;letter-spacing:-0.049px">2. Консультация стоматолога-терапевта . Кол-во= 1</div>
<div class="t lst" style="left:14.00px;top:301px;letter-spacing:-0.015px">3. Анестезия с применением карпульной технологии . Кол-во= 1</div>
<div class="t lst" style="left:14.00px;top:317px;letter-spacing:0.007px">4. Анестезия места вкола иглы (спрей) . Кол-во= 1</div>
<div class="t lst" style="left:14.00px;top:333px;letter-spacing:-0.030px">5. Применение кариес-маркера . Кол-во= 1</div>
<div class="t lst" style="left:14.00px;top:349px;letter-spacing:0.086px">6. Лечение   кариеса . Кол-во= 1</div>
<div class="t lst" style="left:14.00px;top:365px;letter-spacing:-0.050px">7. Использование ретракционной нити . Кол-во= 1</div>
<div class="a" style="left:13px;top:267px;width:1px;height:16px;background:#000;"></div>
<div class="a" style="left:995px;top:265px;width:18px;height:118px;background-color:#e6e3dc;background-image:repeating-conic-gradient(#d4d0c8 0 25%,#f4f2ee 0 50%);background-size:2px 2px"></div>
<div class="sbtn" style="left:995px;top:265px;width:18px;height:18px"><svg width="15" height="15" shape-rendering="crispEdges"><path d="M2.5 9 L11.5 9 L7 4.5 Z" fill="#000"/></svg></div>
<div class="sbtn" style="left:995px;top:366px;width:18px"><svg width="15" height="15" shape-rendering="crispEdges"><path d="M2.5 6 L11.5 6 L7 10.5 Z" fill="#000"/></svg></div>
<div class="sbtn" style="left:995px;top:283px;height:24px;width:18px"></div>
<div class="box" style="left:9px;top:386px;width:1006px;height:349px;overflow:hidden"></div>
<div class="a" style="left:11px;top:388px;width:984px;height:344px;overflow:hidden">
<div class="t grn" style="left:3.00px;top:4px;letter-spacing:0.138px">28 АПРЕЛЯ 2008 Г.(1). {11}. ЛЕЧЕНИЕ КАРИЕСА.</div>
<div class="t grn" style="left:3.00px;top:52px;letter-spacing:0.120px">ЖАЛОБЫ.</div>
<div class="t grn" style="left:106.00px;top:52px;letter-spacing:-0.003px">санируется. косметический дефект. на наличие полости в зубе. на боли от холодного. на боли от сладкого. дефект. На горячее. На холодное.</div>
<div class="t grn" style="left:2.00px;top:68px;letter-spacing:-0.068px">При надкусывании. Жалобы.</div>
<div class="t grn" style="left:3.00px;top:100px;letter-spacing:0.227px">АНАМНЕЗ.</div>
<div class="t grn" style="left:111.00px;top:100px;letter-spacing:0.030px">зуб ранее лечен.</div>
<div class="t grn" style="left:3.00px;top:132px;letter-spacing:0.099px">ДИАГНОЗ.</div>
<div class="t grn" style="left:108.00px;top:132px;letter-spacing:-0.037px">дефект пломбы. кариес начальный. кариес средний. кариес глубокий. кариес эмали. кариес дентина. клиновидный дефект. патологическая</div>
<div class="t grn" style="left:3.00px;top:148px;letter-spacing:-0.040px">стираемость эмали. ипоплазия эмали. трещины эмали. флюороз. крапчатость эмали. эрозия зуба.</div>
<div class="t grn" style="left:3.00px;top:180px;letter-spacing:0.099px">ЛЕЧЕНИЕ.</div>
<div class="t grn" style="left:109.00px;top:180px;letter-spacing:0.025px">1. Осмотр  специалиста . Кол-во= 1</div>
<div class="t grn" style="left:3.00px;top:196px;letter-spacing:-0.049px">2. Консультация стоматолога-терапевта . Кол-во= 1</div>
<div class="t grn" style="left:3.00px;top:212px;letter-spacing:-0.015px">3. Анестезия с применением карпульной технологии . Кол-во= 1</div>
<div class="t grn" style="left:3.00px;top:228px;letter-spacing:0.007px">4. Анестезия места вкола иглы (спрей) . Кол-во= 1</div>
<div class="t grn" style="left:3.00px;top:244px;letter-spacing:-0.030px">5. Применение кариес-маркера . Кол-во= 1</div>
<div class="t grn" style="left:3.00px;top:260px;letter-spacing:0.086px">6. Лечение   кариеса . Кол-во= 1</div>
<div class="t grn" style="left:3.00px;top:276px;letter-spacing:-0.050px">7. Использование ретракционной нити . Кол-во= 1</div>
<div class="t grn" style="left:3.00px;top:292px;letter-spacing:0.005px">8. Изолирующая  салфетка Dry Tips (1 шт) . Кол-во= 1</div>
<div class="t grn" style="left:3.00px;top:308px;letter-spacing:-0.048px">9. Удаление старой пломбы (композитная) . Кол-во= 1</div>
<div class="t grn" style="left:2.00px;top:324px;letter-spacing:-0.047px">10. Удаление старой пломбы (металлическая) . Кол-во= 1</div>
<div class="t grn" style="left:3.5px;top:340px;letter-spacing:-0.03px">11. Удаление старой пломбы (амальгамная) . Кол-во= 1</div>
<div class="a" style="left:4px;top:30px;width:398px;height:1px;background-image:repeating-linear-gradient(90deg,#3a9a3a 0 2px,transparent 2px 4px)"></div>
</div>
<div class="a" style="left:995px;top:388px;width:18px;height:345px;background-color:#e6e3dc;background-image:repeating-conic-gradient(#d4d0c8 0 25%,#f4f2ee 0 50%);background-size:2px 2px"></div>
<div class="sbtn" style="left:995px;top:388px;width:18px;height:18px"><svg width="15" height="15" shape-rendering="crispEdges"><path d="M2.5 9 L11.5 9 L7 4.5 Z" fill="#000"/></svg></div>
<div class="sbtn" style="left:995px;top:716px;width:18px"><svg width="15" height="15" shape-rendering="crispEdges"><path d="M2.5 6 L11.5 6 L7 10.5 Z" fill="#000"/></svg></div>
<div class="sbtn" style="left:995px;top:406px;height:186px;width:18px"></div>
<div class="raised" style="left:9px;top:737px;width:50px;height:23px"></div>
<svg class="ico" style="left:27px;top:741px;" width="16" height="16" viewBox="0 0 16 16" shape-rendering="crispEdges"><rect x="0" y="0" width="9" height="1" fill="#003c8c"/><rect x="0" y="0" width="1" height="14" fill="#003c8c"/><rect x="0" y="13" width="12" height="1" fill="#003c8c"/><rect x="11" y="4" width="1" height="10" fill="#003c8c"/><rect x="1" y="1" width="8" height="12" fill="#eeeee8"/><rect x="9" y="4" width="2" height="9" fill="#eeeee8"/><rect x="8" y="1" width="1" height="4" fill="#003c8c"/><rect x="8" y="4" width="4" height="1" fill="#003c8c"/><rect x="9" y="1" width="1" height="1" fill="#003c8c"/><rect x="10" y="2" width="1" height="1" fill="#003c8c"/><rect x="6" y="9" width="5" height="4" fill="#d0b0f0"/><rect x="1" y="14" width="12" height="1" fill="#a09c94"/><rect x="12" y="5" width="1" height="10" fill="#a09c94"/><g shape-rendering="geometricPrecision"><path d="M4 11 L13.5 2" stroke="#e0a000" stroke-width="1.8"/><path d="M4.5 10.3 L13 2.3" stroke="#ffd040" stroke-width="0.8"/><circle cx="13.8" cy="1.8" r="1.3" fill="#ff9090"/></g></svg>
<svg class="ico" style="left:73px;top:741px;" width="15" height="15" viewBox="0 0 15 15" shape-rendering="crispEdges"><g shape-rendering="geometricPrecision"><path d="M1.5 1.5 L13 13 M13 1.5 L1.5 13" stroke="#808080" stroke-width="2.6"/></g></svg>
<svg class="ico" style="left:108px;top:744px;" width="11" height="11" viewBox="0 0 11 11" shape-rendering="crispEdges"><rect x="0" y="0" width="2" height="10" fill="#808080"/><path d="M10 0 L10 10 L3 5 Z" fill="#808080" /></svg>
<svg class="ico" style="left:132px;top:744px;" width="8" height="11" viewBox="0 0 8 11" shape-rendering="crispEdges"><path d="M7 0 L7 10 L0 5 Z" fill="#808080" /></svg>
<svg class="ico" style="left:157px;top:744px;" width="8" height="11" viewBox="0 0 8 11" shape-rendering="crispEdges"><path d="M0 0 L0 10 L7 5 Z" fill="#808080" /></svg>
<svg class="ico" style="left:178px;top:744px;" width="10" height="11" viewBox="0 0 10 11" shape-rendering="crispEdges"><path d="M0 0 L0 10 L7 5 Z" fill="#808080" /><rect x="8" y="0" width="2" height="10" fill="#808080"/></svg>
<svg class="ico" style="left:197px;top:740px;" width="16" height="17" viewBox="0 0 16 17" shape-rendering="crispEdges"><g shape-rendering="geometricPrecision"><path d="M8 1 A7 6 0 1 1 7.9 1Z" fill="#eeeee8" stroke="#60c0e0" stroke-width="0.9"/><path d="M14 9 A7 6 0 0 1 4 12" fill="none" stroke="#1a3a9a" stroke-width="1.2"/><path d="M6 12 L7.5 16 L10 12Z" fill="#60b0e0"/></g><rect x="6" y="1" width="3" height="2" fill="#000080"/><rect x="5" y="4" width="3" height="1" fill="#000080"/><rect x="6" y="4" width="3" height="6" fill="#000080"/><rect x="5" y="9" width="5" height="2" fill="#000080"/></svg>
<svg class="ico" style="left:221px;top:741px;" width="15" height="14" viewBox="0 0 15 14" shape-rendering="crispEdges"><rect x="0" y="0" width="15" height="14" fill="#808080"/></svg>
<svg class="ico" style="left:253px;top:741px;" width="16" height="15" viewBox="0 0 16 15" shape-rendering="crispEdges"><g shape-rendering="geometricPrecision"><path d="M3 2 L9 1 L10 4 L15 5 L15 11 L12 14 L6 14 L5 11 L1 10 L1 5 Z" fill="#909090"/></g></svg>
<svg class="ico" style="left:286px;top:741px;" width="15" height="16" viewBox="0 0 15 16" shape-rendering="crispEdges"><rect x="4" y="0" width="3" height="3" fill="#000"/><rect x="9" y="0" width="3" height="3" fill="#000"/><rect x="3" y="3" width="4" height="9" fill="#000"/><rect x="9" y="3" width="4" height="11" fill="#000"/><rect x="7" y="4" width="2" height="3" fill="#000"/><rect x="13" y="8" width="1" height="6" fill="#000"/><rect x="5" y="1" width="1" height="1" fill="#e0e0e0"/><rect x="10" y="1" width="1" height="1" fill="#e0e0e0"/><rect x="10" y="4" width="1" height="1" fill="#e0e0e0"/><rect x="10" y="12" width="1" height="1" fill="#e0e0e0"/><rect x="0" y="5" width="10" height="10" fill="#003c8c"/><rect x="1" y="6" width="8" height="8" fill="#f4f4ee"/><rect x="1" y="7" width="8" height="1" fill="#003c8c"/><rect x="2" y="8" width="6" height="4" fill="#003c8c"/><rect x="3" y="9" width="1" height="1" fill="#f4f4ee"/><rect x="6" y="9" width="1" height="1" fill="#f4f4ee"/><rect x="4" y="11" width="2" height="1" fill="#f4f4ee"/><rect x="1" y="15" width="13" height="1" fill="#a09c94"/></svg>
<svg class="ico" style="left:309px;top:740px;" width="17" height="17" viewBox="0 0 17 17" shape-rendering="crispEdges"><rect x="0" y="0" width="16" height="16" fill="#003c8c"/><rect x="1" y="1" width="14" height="14" fill="#f4f4ee"/><rect x="1" y="1" width="14" height="5" fill="#00e000"/><rect x="4" y="4" width="8" height="8" fill="#003c8c"/><rect x="3" y="6" width="1" height="6" fill="#003c8c"/><rect x="12" y="6" width="1" height="6" fill="#003c8c"/><rect x="5" y="5" width="1" height="3" fill="#f4f4ee"/><rect x="9" y="5" width="1" height="3" fill="#f4f4ee"/><rect x="7" y="10" width="2" height="2" fill="#f4f4ee"/><rect x="1" y="16" width="16" height="1" fill="#a09c94"/><rect x="16" y="1" width="1" height="16" fill="#a09c94"/></svg>
<svg class="ico" style="left:342px;top:741px;" width="15" height="16" viewBox="0 0 15 16" shape-rendering="crispEdges"><rect x="4" y="0" width="3" height="3" fill="#000"/><rect x="9" y="0" width="3" height="3" fill="#000"/><rect x="3" y="3" width="4" height="9" fill="#000"/><rect x="9" y="3" width="4" height="11" fill="#000"/><rect x="7" y="4" width="2" height="3" fill="#000"/><rect x="13" y="8" width="1" height="6" fill="#000"/><rect x="5" y="1" width="1" height="1" fill="#e0e0e0"/><rect x="10" y="1" width="1" height="1" fill="#e0e0e0"/><rect x="10" y="4" width="1" height="1" fill="#e0e0e0"/><rect x="10" y="12" width="1" height="1" fill="#e0e0e0"/><rect x="0" y="5" width="10" height="10" fill="#003c8c"/><rect x="1" y="6" width="8" height="8" fill="#f4f4ee"/><rect x="1" y="7" width="8" height="1" fill="#003c8c"/><rect x="2" y="8" width="6" height="4" fill="#003c8c"/><rect x="3" y="9" width="1" height="1" fill="#f4f4ee"/><rect x="6" y="9" width="1" height="1" fill="#f4f4ee"/><rect x="4" y="11" width="2" height="1" fill="#f4f4ee"/><rect x="1" y="15" width="13" height="1" fill="#a09c94"/></svg>
<svg class="ico" style="left:366px;top:740px;" width="17" height="17" viewBox="0 0 17 17" shape-rendering="crispEdges"><rect x="0" y="0" width="15" height="16" fill="#003c8c"/><rect x="1" y="1" width="13" height="14" fill="#f4f4ee"/><rect x="3" y="4" width="8" height="8" fill="#003c8c"/><rect x="2" y="6" width="1" height="6" fill="#003c8c"/><rect x="11" y="6" width="1" height="6" fill="#003c8c"/><rect x="4" y="5" width="1" height="3" fill="#f4f4ee"/><rect x="8" y="5" width="1" height="3" fill="#f4f4ee"/><rect x="6" y="10" width="2" height="2" fill="#f4f4ee"/><path d="M9 0 L16 0 L16 12 Z" fill="#f8e0a0"/><rect x="1" y="16" width="15" height="1" fill="#a09c94"/></svg>
<svg class="ico" style="left:399px;top:740px;" width="16" height="16" viewBox="0 0 16 16" shape-rendering="crispEdges"><g shape-rendering="geometricPrecision"><circle cx="4" cy="5" r="2.5" fill="#5050c8"/><circle cx="4" cy="5" r="1" fill="#d0d0ff"/><ellipse cx="4" cy="11" rx="3.5" ry="3.5" fill="#7070d0"/><circle cx="10" cy="4" r="3.2" fill="#2a2a9a"/><circle cx="9" cy="3" r="1" fill="#c0c0ff"/><ellipse cx="10" cy="12" rx="5.5" ry="4.2" fill="#2a2aa0"/></g></svg>
<svg class="ico" style="left:421px;top:740px;" width="17" height="16" viewBox="0 0 17 16" shape-rendering="crispEdges"><rect x="0" y="0" width="17" height="16" fill="#ffff00"/><rect x="1" y="1" width="15" height="14" fill="#000"/><rect x="3" y="3" width="11" height="4" fill="#fff"/><rect x="4" y="7" width="3" height="5" fill="#fff"/><rect x="10" y="7" width="3" height="5" fill="#fff"/><rect x="7" y="8" width="3" height="2" fill="#fff"/></svg>
<svg class="ico" style="left:889px;top:740px;" width="16" height="16" viewBox="0 0 16 16" shape-rendering="crispEdges"><rect x="3" y="2" width="6" height="6" fill="#a8a49c"/><rect x="9" y="4" width="6" height="6" fill="#a8a49c"/><rect x="1" y="8" width="6" height="6" fill="#a8a49c"/><rect x="7" y="10" width="6" height="6" fill="#a8a49c"/><rect x="2" y="1" width="1" height="6" fill="#0a84ff"/><rect x="3" y="1" width="1" height="6" fill="#8a8aff"/><rect x="4" y="1" width="1" height="6" fill="#0a84ff"/><rect x="5" y="1" width="1" height="6" fill="#8a8aff"/><rect x="6" y="1" width="1" height="6" fill="#0a84ff"/><rect x="7" y="1" width="1" height="6" fill="#8a8aff"/><rect x="8" y="3" width="1" height="6" fill="#0a84ff"/><rect x="9" y="3" width="1" height="6" fill="#8a8aff"/><rect x="10" y="3" width="1" height="6" fill="#0a84ff"/><rect x="11" y="3" width="1" height="6" fill="#8a8aff"/><rect x="12" y="3" width="1" height="6" fill="#0a84ff"/><rect x="13" y="3" width="1" height="6" fill="#8a8aff"/><rect x="0" y="7" width="6" height="1" fill="#6a10ff"/><rect x="0" y="8" width="6" height="1" fill="#000080"/><rect x="0" y="9" width="6" height="1" fill="#6a10ff"/><rect x="0" y="10" width="6" height="1" fill="#000080"/><rect x="0" y="11" width="6" height="1" fill="#6a10ff"/><rect x="0" y="12" width="6" height="1" fill="#000080"/><rect x="6" y="9" width="6" height="1" fill="#6a10ff"/><rect x="6" y="10" width="6" height="1" fill="#000080"/><rect x="6" y="11" width="6" height="1" fill="#6a10ff"/><rect x="6" y="12" width="6" height="1" fill="#000080"/><rect x="6" y="13" width="6" height="1" fill="#6a10ff"/><rect x="6" y="14" width="6" height="1" fill="#000080"/></svg>
<div class="a" style="left:950px;top:740px;width:15px;height:15px;border:1px solid #000;box-shadow:inset 1px 1px 0 rgba(0,0,0,.55),inset -1px -1px 0 rgba(0,0,0,.55);background:#ebeae4"></div>
<div class="a" style="left:970px;top:737px;width:22px;height:22px;border-top:1px solid #808080;border-left:1px solid #808080;border-right:1px solid #eeede8;border-bottom:1px solid #eeede8;background:#e4e2dc"></div>
<div class="a" style="left:972px;top:739px;width:18px;height:18px;border:1px dotted #fff"></div>
<div class="a" style="left:974px;top:741px;width:15px;height:15px;border:1px solid #000;box-shadow:inset 1px 1px 0 rgba(0,0,0,.55),inset -1px -1px 0 rgba(0,0,0,.55);background:linear-gradient(#ebeae4 0 6px,#000 6px 7px,#c0c0c0 7px)"></div>
<div class="a" style="left:996px;top:740px;width:15px;height:15px;border:1px solid #000;box-shadow:inset 1px 1px 0 rgba(0,0,0,.55),inset -1px -1px 0 rgba(0,0,0,.55);background:#c0c0c0"></div>
<svg class="ico" style="left:830px;top:575px" width="160" height="185" shape-rendering="geometricPrecision">
<defs><radialGradient id="rg" cx="0.5" cy="0.5" r="0.5"><stop offset="0.815" stop-color="#ebeae4"/><stop offset="0.83" stop-color="#ffe6cc"/><stop offset="0.85" stop-color="#ffd0c0"/><stop offset="0.87" stop-color="#ffb4b0"/><stop offset="0.93" stop-color="#ff9898"/><stop offset="0.965" stop-color="#ff7070"/><stop offset="0.975" stop-color="#ff0000"/><stop offset="1" stop-color="#ff0000"/></radialGradient><radialGradient id="sg" cx="0.5" cy="0.5" r="0.5"><stop offset="0.86" stop-color="#707070"/><stop offset="0.92" stop-color="#8a8a8a"/><stop offset="0.97" stop-color="#b8b8b4"/><stop offset="1" stop-color="#dcdcd6"/></radialGradient></defs>
<ellipse cx="84" cy="77" rx="72" ry="69" fill="url(#sg)"/>
<path d="M104 130 L130 174 L124 126Z" fill="#8c8c8c"/><path d="M108 132 L132 175 L126 128Z" fill="#b4b4b0" opacity="0.6"/>
<ellipse cx="79" cy="73" rx="68" ry="65" fill="url(#rg)"/>
<path d="M100 127 L125.5 169.5 L117 122 Z" fill="#ff9494"/>
<path d="M101 130 L125.5 169.5 L116.5 124" fill="none" stroke="#ff0000" stroke-width="2.2"/>
</svg>
<div class="t " style="left:863.00px;top:616px;letter-spacing:0.000px;font-size:13px;font-weight:bold;color:#101020;transform:scaleY(1.1);transform-origin:0 11px">Для удобства</div>
<div class="t " style="left:876.00px;top:633px;letter-spacing:0.000px;font-size:13px;font-weight:bold;color:#101020;transform:scaleY(1.1);transform-origin:0 11px">отключим</div>
<div class="t " style="left:861.00px;top:649px;letter-spacing:0.082px;font-size:13px;font-weight:bold;color:#101020;transform:scaleY(1.1);transform-origin:0 11px">предваритель</div>
<div class="t " style="left:861.00px;top:666px;letter-spacing:0.000px;font-size:13px;font-weight:bold;color:#101020;transform:scaleY(1.1);transform-origin:0 11px">ный просмотр</div>
</body></html>
